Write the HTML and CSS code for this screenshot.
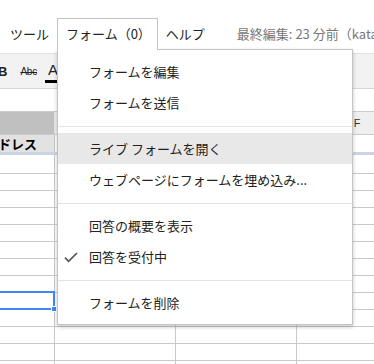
FILE: index.html
```html
<!DOCTYPE html>
<html lang="ja">
<head>
<meta charset="utf-8">
<link rel="stylesheet" href="styles.css">
</head>
<body>
<div class="app">
  <div class="menubar">
    <span class="mi mi-first">ツール</span>
    <span class="mi tab">フォーム（0）</span>
    <span class="mi mi-help">ヘルプ</span>
    <span class="saved">最終編集: 23 分前（katayama さん）</span>
  </div>

  <div class="toolbar">
    <span class="tb-bold">B</span>
    <span class="tb-strike">Abc</span>
    <span class="tb-color">A<span class="tb-bar"></span></span>
  </div>

  <div class="formula"></div>

  <div class="cols colheads">
    <div class="ch ch-sel"></div>
    <div class="ch">D</div>
    <div class="ch">E</div>
    <div class="ch">F</div>
  </div>

  <div class="cols row1">
    <div class="c c-head"><span>メールアドレス</span></div>
    <div class="c"></div>
    <div class="c"></div>
    <div class="c"></div>
  </div>

  <div class="frozen"></div>

  <div class="cols body">
    <div class="c first"></div><div class="c first"></div><div class="c first"></div><div class="c first"></div>
    <div class="c"></div><div class="c"></div><div class="c"></div><div class="c"></div>
    <div class="c"></div><div class="c"></div><div class="c"></div><div class="c"></div>
    <div class="c"></div><div class="c"></div><div class="c"></div><div class="c"></div>
    <div class="c"></div><div class="c"></div><div class="c"></div><div class="c"></div>
    <div class="c"></div><div class="c"></div><div class="c"></div><div class="c"></div>
    <div class="c"></div><div class="c"></div><div class="c"></div><div class="c"></div>
    <div class="c"></div><div class="c"></div><div class="c"></div><div class="c"></div>
    <div class="c selected"><span class="handle"></span></div><div class="c"></div><div class="c"></div><div class="c"></div>
    <div class="c"></div><div class="c"></div><div class="c"></div><div class="c"></div>
    <div class="c"></div><div class="c"></div><div class="c"></div><div class="c"></div>
    <div class="c"></div><div class="c"></div><div class="c"></div><div class="c"></div>
    <div class="c"></div><div class="c"></div><div class="c"></div><div class="c"></div>
  </div>

  <div class="dropdown">
    <div class="item">フォームを編集</div>
    <div class="item">フォームを送信</div>
    <div class="sep"></div>
    <div class="item hover">ライブ フォームを開く</div>
    <div class="item">ウェブページにフォームを埋め込み...</div>
    <div class="sep"></div>
    <div class="item">回答の概要を表示</div>
    <div class="item checked">
      <svg class="check" width="14" height="11" viewBox="0 0 14 11"><path d="M1 5.6 L4.6 9.4 L13 1" fill="none" stroke="#555" stroke-width="1.7"/></svg>
      回答を受付中
    </div>
    <div class="sep"></div>
    <div class="item">フォームを削除</div>
  </div>
</div>
</body>
</html>
```

FILE: styles.css
```css
* { box-sizing: border-box; }
html, body { margin: 0; padding: 0; background: #fff; }
body {
  font-family: "Noto Sans CJK JP", "Liberation Sans", sans-serif;
  font-size: 13px;
  color: #222;
}
.app {
  position: relative;
  width: 374px;
  height: 364px;
  overflow: hidden;
  background: #fff;
}

/* menu bar */
.menubar {
  height: 53px;
  display: flex;
  align-items: flex-start;
  padding: 18px 0 0 10px;
  white-space: nowrap;
}
.mi {
  height: 31px;
  line-height: 31px;
  color: #222;
}
.mi-first { margin-right: 8px; }
.tab {
  position: relative;
  z-index: 3;
  height: 32px;
  line-height: 30px;
  padding: 0 6px 0 8px;
  background: #fff;
  border: 1px solid #c4c4c4;
  border-bottom: none;
}
.mi-help { margin-left: 8px; }
.saved {
  margin-left: 32px;
  height: 31px;
  line-height: 31px;
  color: #777;
}

/* toolbar */
.toolbar {
  height: 36px;
  background: #f2f2f2;
  border-top: 1px solid #e0e0e0;
  border-bottom: 1px solid #d6d6d6;
  display: flex;
  align-items: center;
  font-family: "Liberation Sans", sans-serif;
}
.tb-bold {
  font-weight: bold;
  font-size: 13px;
  margin-left: -2px;
  color: #222;
}
.tb-strike {
  margin-left: 13px;
  font-size: 10px;
  letter-spacing: -0.2px;
  color: #222;
  text-decoration: line-through;
}
.tb-color {
  position: relative;
  margin-left: 11px;
  font-size: 15px;
  color: #222;
  padding-bottom: 4px;
}
.tb-bar {
  position: absolute;
  left: -3px;
  bottom: -1px;
  width: 16px;
  height: 3px;
  background: #000;
}

.formula { height: 22px; }

/* grid */
.cols {
  display: grid;
  grid-template-columns: 55px 121px 121px 121px;
  width: 418px;
}
.colheads {
  height: 24px;
  border-top: 1px solid #cbcbcb;
  border-bottom: 1px solid #cbcbcb;
  background: #efefef;
  font-family: "Liberation Sans", sans-serif;
  font-size: 11px;
  color: #333;
}
.ch {
  display: flex;
  align-items: center;
  justify-content: center;
  border-right: 1px solid #d6d6d6;
}
.ch-sel { background: #c0c0c0; border-right-color: #e6e6e6; }

.row1 { height: 17px; }
.row1 .c { border-bottom: none; }
.c {
  height: 17px;
  border-right: 1px solid #c9c9c9;
  border-bottom: 1px solid #c9c9c9;
  position: relative;
}
.c-head {
  background: #e2e2e2;
  display: flex;
  justify-content: flex-end;
  align-items: center;
  padding-right: 17px;
  overflow: hidden;
  white-space: nowrap;
  font-weight: bold;
  font-size: 13px;
  color: #000;
  line-height: 17px;
}
.frozen {
  height: 3px;
  background: #cbd4e5;
}
.c.first { height: 19px; }

.selected::after {
  content: "";
  position: absolute;
  left: -2px;
  top: -2px;
  right: -1px;
  bottom: -1px;
  border: 2px solid #4285f4;
}
.handle {
  position: absolute;
  z-index: 1;
  right: -3px;
  bottom: -3px;
  width: 6px;
  height: 6px;
  background: #4285f4;
  border: 1px solid #fff;
}

/* dropdown */
.dropdown {
  position: absolute;
  z-index: 2;
  left: 57px;
  top: 49px;
  width: 296px;
  background: #fff;
  border: 1px solid #c4c4c4;
  padding: 6px 0;
  box-shadow: 0 2px 4px rgba(0, 0, 0, 0.22);
}
.item {
  position: relative;
  height: 31px;
  line-height: 31px;
  padding-left: 31px;
  color: #222;
  white-space: nowrap;
}
.item.hover { background: #e8e8e8; }
.check {
  position: absolute;
  left: 6px;
  top: 11px;
}
.sep {
  height: 1px;
  background: #e3e3e3;
  margin: 8px 0 6px;
}
```
